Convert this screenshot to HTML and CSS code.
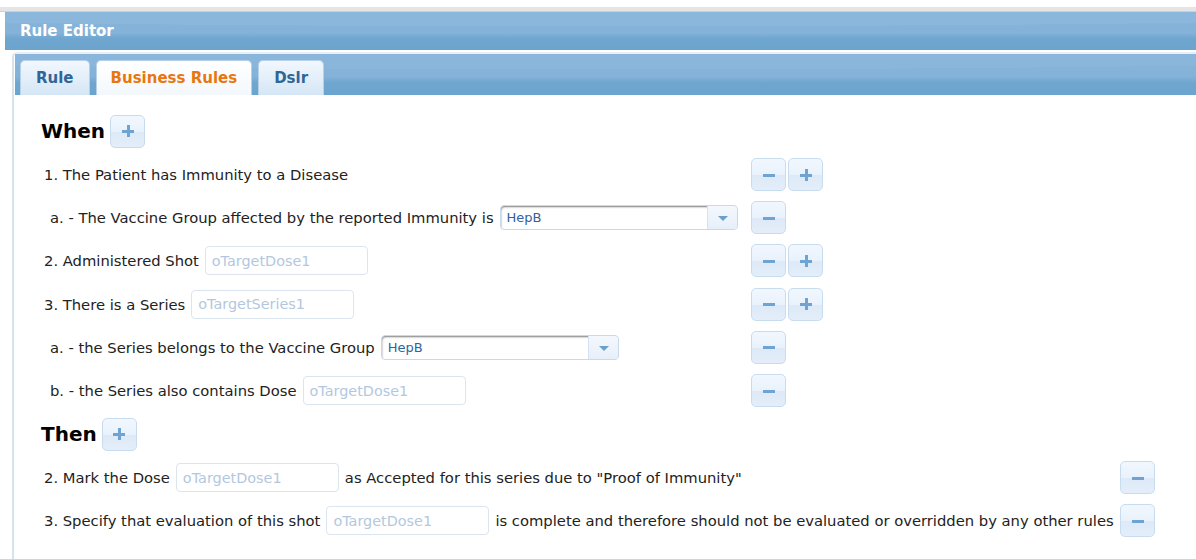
FILE: index.html
```html
<!DOCTYPE html>
<html>
<head>
<meta charset="utf-8">
<title>Rule Editor</title>
<link rel="stylesheet" href="styles.css">
</head>
<body>
<div class="topline"></div>
<div class="window">
  <div class="titlebar">Rule Editor</div>
  <div class="panel">
    <div class="tabstrip">
      <div class="tab">Rule</div>
      <div class="tab active">Business Rules</div>
      <div class="tab">Dslr</div>
    </div>
    <div class="content">
      <div class="block when">
        <div class="heading"><span class="title">When</span><button class="btn"><span class="ico plus"></span></button></div>

        <div class="row">
          <div class="text">1. The Patient has Immunity to a Disease</div>
          <div class="actions"><button class="btn"><span class="ico minus"></span></button><button class="btn"><span class="ico plus"></span></button></div>
        </div>

        <div class="row sub">
          <div class="text">a. - The Vaccine Group affected by the reported Immunity is
            <span class="select"><span class="value">HepB</span><span class="arrow"></span></span></div>
          <div class="actions"><button class="btn"><span class="ico minus"></span></button></div>
        </div>

        <div class="row">
          <div class="text">2. Administered Shot <span class="field">oTargetDose1</span></div>
          <div class="actions"><button class="btn"><span class="ico minus"></span></button><button class="btn"><span class="ico plus"></span></button></div>
        </div>

        <div class="row">
          <div class="text">3. There is a Series <span class="field">oTargetSeries1</span></div>
          <div class="actions"><button class="btn"><span class="ico minus"></span></button><button class="btn"><span class="ico plus"></span></button></div>
        </div>

        <div class="row sub">
          <div class="text">a. - the Series belongs to the Vaccine Group
            <span class="select"><span class="value">HepB</span><span class="arrow"></span></span></div>
          <div class="actions"><button class="btn"><span class="ico minus"></span></button></div>
        </div>

        <div class="row sub">
          <div class="text">b. - the Series also contains Dose <span class="field">oTargetDose1</span></div>
          <div class="actions"><button class="btn"><span class="ico minus"></span></button></div>
        </div>
      </div>

      <div class="block then">
        <div class="heading"><span class="title">Then</span><button class="btn"><span class="ico plus"></span></button></div>

        <div class="row">
          <div class="text">2. Mark the Dose <span class="field">oTargetDose1</span> as Accepted for this series due to "Proof of Immunity"</div>
          <div class="actions"><button class="btn"><span class="ico minus"></span></button></div>
        </div>

        <div class="row">
          <div class="text">3. Specify that evaluation of this shot <span class="field">oTargetDose1</span> is complete and therefore should not be evaluated or overridden by any other rules</div>
          <div class="actions"><button class="btn"><span class="ico minus"></span></button></div>
        </div>
      </div>
    </div>
  </div>
</div>
</body>
</html>
```

FILE: styles.css
```css
html, body {
  margin: 0;
  padding: 0;
  background: #ffffff;
}

body {
  padding-top: 7px;
  font-family: "DejaVu Sans", Verdana, sans-serif;
  font-size: 14.75px;
  color: #222222;
}

.topline {
  height: 4px;
  background: #e5e5e5;
  border-bottom: 1px solid #cfcfcf;
}

.window {
  padding-left: 5px;
}

/* window caption with a two-tone glossy band */
.titlebar {
  height: 38px;
  box-sizing: border-box;
  padding: 0 0 0 15px;
  display: flex;
  align-items: center;
  color: #ffffff;
  font-weight: bold;
  font-size: 15px;
  background:
    radial-gradient(ellipse 120% 60% at 50% 0%, #8ab7db 0 62%, transparent 63%),
    linear-gradient(#88b5d9 0, #84b2d8 55%, #6ea6cf 70%, #6ca4ce 100%);
}

.panel {
  margin: 2px 0 0 7px;
  border-left: 2px solid #d3e3f2;
  border-top: 2px solid #e7f0f8;
  border-top-left-radius: 5px;
  min-height: 520px;
}

.tabstrip {
  height: 41px;
  margin-left: 1px;
  box-sizing: border-box;
  padding: 6px 0 0 5px;
  display: flex;
  align-items: flex-end;
  gap: 6px;
  background:
    radial-gradient(ellipse 120% 60% at 50% 0%, #89b6da 0 62%, transparent 63%),
    linear-gradient(#88b5d9 0, #84b2d8 55%, #6ea6cf 70%, #6ba4ce 100%);
}

.tab {
  height: 35px;
  box-sizing: border-box;
  padding: 0 15px;
  display: flex;
  align-items: center;
  font-weight: bold;
  font-size: 15px;
  color: #2f6698;
  border: 1px solid #b7d1e8;
  border-bottom: none;
  border-radius: 5px 5px 0 0;
  background: linear-gradient(#f1f7fd 0, #e4eff9 50%, #d4e6f5 100%);
}

.tab.active {
  color: #e8770f;
  background: linear-gradient(#ffffff 0, #f8fbfe 60%, #f3f8fc 100%);
  padding: 0 14px;
}

.content {
  padding: 14px 0 0 27px;
}

.heading {
  height: 44px;
  display: flex;
  align-items: center;
  gap: 5px;
}

.title {
  font-size: 20px;
  font-weight: bold;
  color: #000000;
}

.row {
  height: 43.2px;
  display: grid;
  align-items: center;
  padding-left: 3px;
}

.when .row { grid-template-columns: 707px auto; }
.then .row { grid-template-columns: 1076px auto; }

.row.sub .text { padding-left: 6px; }

.text {
  display: flex;
  align-items: center;
  gap: 6px;
  white-space: nowrap;
}

.actions {
  display: flex;
  gap: 2px;
}

.btn {
  width: 35px;
  height: 33px;
  padding: 0;
  margin: 0;
  box-sizing: border-box;
  border: 1px solid #c8dcef;
  border-radius: 5px;
  background: linear-gradient(#f1f7fe 0, #e9f2fc 50%, #dde9f7 52%, #e4eefa 100%);
  display: flex;
  align-items: center;
  justify-content: center;
}

.ico {
  position: relative;
  display: block;
  width: 12px;
  height: 12px;
}

.ico::before,
.ico.plus::after {
  content: "";
  position: absolute;
  background: #6ea3d2;
}

.ico::before {
  left: 0;
  top: 5px;
  width: 12px;
  height: 3px;
}

.ico.plus::after {
  left: 5px;
  top: 0;
  width: 3px;
  height: 12px;
}

.field {
  width: 163px;
  height: 29px;
  box-sizing: border-box;
  border: 1px solid #dae5f0;
  border-radius: 4px;
  padding: 0 6px;
  display: flex;
  align-items: center;
  font-size: 14.4px;
  color: #b3c8de;
  background: #ffffff;
}

.select {
  width: 238px;
  height: 25px;
  box-sizing: border-box;
  border: 1px solid #c7d9ea;
  border-radius: 4px;
  display: flex;
  background: #ffffff;
  box-shadow: inset 1px 2px 2px -1px #7d7d7d;
  overflow: hidden;
}

.select .value {
  flex: 1;
  display: flex;
  align-items: center;
  padding-left: 6px;
  font-size: 13px;
  color: #2e63a0;
}

.select .arrow {
  width: 29px;
  border-left: 1px solid #d4e3f1;
  background: linear-gradient(#f4f8fd, #e6eff9);
  position: relative;
}

.select .arrow::after {
  content: "";
  position: absolute;
  left: 10px;
  top: 10px;
  border-left: 5px solid transparent;
  border-right: 5px solid transparent;
  border-top: 5px solid #6b9fcc;
}
```
